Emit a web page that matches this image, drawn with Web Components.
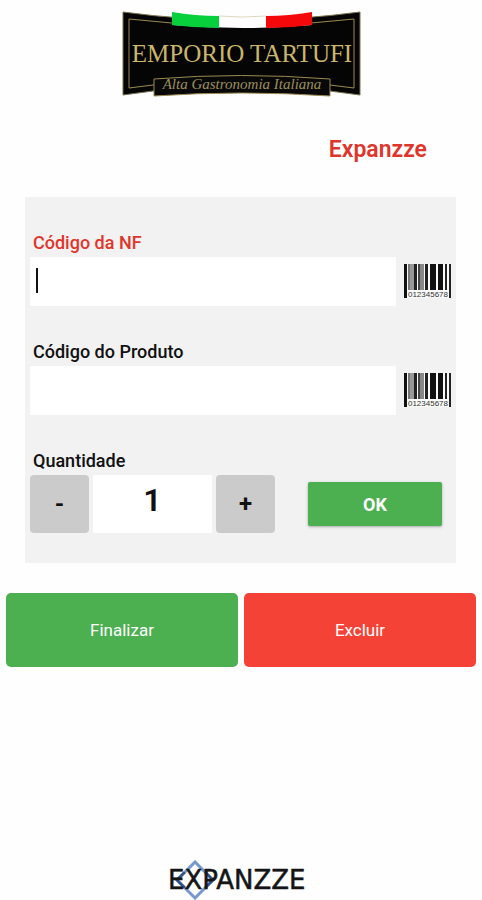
<!DOCTYPE html>
<html lang="pt-BR">
<head>
<meta charset="utf-8">
<meta name="viewport" content="width=device-width, initial-scale=1">
<title>Expanzze</title>
<style>
    body {
        margin: 0;
        background: #fefefe;
        color: #111;
        font-family: Roboto, "Liberation Sans", sans-serif;
    }
</style>
</head>
<body>
<expedition-page>
    <emporio-logo slot="logo"></emporio-logo>
    <span slot="user">Expanzze</span>
    <code-field label="Código da NF" active></code-field>
    <code-field label="Código do Produto"></code-field>
    <quantity-field label="Quantidade" value="1"></quantity-field>
    <action-button slot="actions">Finalizar</action-button>
    <action-button slot="actions" kind="danger">Excluir</action-button>
    <expanzze-logo slot="footer"></expanzze-logo>
</expedition-page>

<script>
class ExpeditionPage extends HTMLElement {

    connectedCallback() {
        this.attachShadow({ mode: 'open' });
        this.shadowRoot.innerHTML = `
            <style>
                :host {
                    display: flex;
                    flex-direction: column;
                    min-height: 100vh;
                }
                header {
                    display: flex;
                    flex-direction: column;
                    padding-top: 10px;
                }
                .logo {
                    display: flex;
                    justify-content: center;
                }
                .user {
                    align-self: flex-end;
                    margin: 37px 55px 0 0;
                    color: #e0352b;
                    font-size: 23px;
                    line-height: 32px;
                    font-weight: 600;
                }
                main {
                    display: flex;
                    flex-direction: column;
                    gap: 32px;
                    margin: 31px 26px 0 25px;
                    padding: 32px 4px 30px 5px;
                    background: #f2f2f2;
                }
                .actions {
                    display: grid;
                    grid-template-columns: 1fr 1fr;
                    gap: 6px;
                    margin: 30px 6px;
                }
                footer {
                    display: flex;
                    justify-content: center;
                    margin-top: auto;
                }
            </style>
            <header>
                <div class="logo"><slot name="logo"></slot></div>
                <div class="user"><slot name="user"></slot></div>
            </header>
            <main><slot></slot></main>
            <div class="actions"><slot name="actions"></slot></div>
            <footer><slot name="footer"></slot></footer>
        `;
    }
}

class CodeField extends HTMLElement {

    connectedCallback() {
        this.attachShadow({ mode: 'open' });
        this.shadowRoot.innerHTML = `
            <style>
                :host {
                    display: block;
                }
                label {
                    display: block;
                    padding: 0 3px 1px;
                    font-size: 18px;
                    line-height: 27px;
                    font-weight: 500;
                }
                :host([active]) label {
                    color: #e0352b;
                }
                .row {
                    display: flex;
                    gap: 8px;
                }
                input {
                    flex: 1;
                    min-width: 0;
                    box-sizing: border-box;
                    height: 49px;
                    padding: 0 8px;
                    border: 0;
                    outline: 0;
                    background: #fff;
                    font: inherit;
                    font-size: 20px;
                }
                /* caret of the field that waits for the scanner */
                :host([active]) input {
                    caret-color: transparent;
                    background: linear-gradient(#111, #111) 6px 11px / 2px 25px no-repeat #fff;
                }
                button {
                    padding: 0;
                    border: 0;
                    background: none;
                }
            </style>
            <label for="code">${this.getAttribute("label")}</label>
            <div class="row">
                <input id="code" type="text" autocomplete="off">
                <button type="button" aria-label="Ler código de barras"><barcode-icon></barcode-icon></button>
            </div>
        `;
    }
}

class BarcodeIcon extends HTMLElement {

    // x, width, colour
    bars = [
        [0, 3, "#111"], [4, 2, "#777"], [6, 4, "#999"],
        [10, 3, "#222"], [14, 2, "#444"], [16, 4, "#888"],
        [21, 3, "#222"], [26, 6, "#111"], [34, 5, "#111"],
        [41, 2, "#222"], [45, 2, "#222"]
    ];

    connectedCallback() {
        this.attachShadow({ mode: 'open' });
        const rects = this.bars
            .map(([x, width, fill], index) => {
                const isGuard = index == 0 || index == this.bars.length - 1;
                return `<rect x="${x}" y="0" width="${width}" height="${isGuard ? 34 : 26}" fill="${fill}"/>`;
            })
            .join("");
        this.shadowRoot.innerHTML = `
            <style>
                :host {
                    display: block;
                }
                svg {
                    display: block;
                }
            </style>
            <svg width="48" height="36" viewBox="0 0 48 36" shape-rendering="crispEdges">
                <rect width="47" height="34" fill="#fafafa"/>
                ${rects}
                <text x="24" y="33" text-anchor="middle" font-family="Liberation Sans, sans-serif" font-size="8" fill="#333">012345678</text>
            </svg>
        `;
    }
}

class QuantityField extends HTMLElement {

    connectedCallback() {
        this.attachShadow({ mode: 'open' });
        this.shadowRoot.innerHTML = `
            <style>
                :host {
                    display: block;
                }
                label {
                    display: block;
                    padding: 0 3px 1px;
                    font-size: 18px;
                    line-height: 27px;
                    font-weight: 500;
                }
                .row {
                    display: flex;
                    align-items: center;
                    gap: 4px;
                }
                button {
                    font: inherit;
                    color: #111;
                    border: 0;
                    padding: 0;
                }
                .step {
                    flex: none;
                    width: 59px;
                    height: 58px;
                    border-radius: 4px;
                    background: #cbcbcb;
                    font-size: 24px;
                    font-weight: 700;
                }
                input {
                    flex: 1;
                    min-width: 0;
                    box-sizing: border-box;
                    height: 58px;
                    padding: 0 0 8px;
                    border: 0;
                    outline: 0;
                    background: #fff;
                    color: #111;
                    font: inherit;
                    font-size: 32px;
                    font-weight: 600;
                    text-align: center;
                }
                .ok {
                    flex: none;
                    width: 134px;
                    height: 44px;
                    margin: 0 10px 0 29px;
                    border-radius: 2px;
                    background: #4caf50;
                    box-shadow: 0 1px 3px rgba(0, 0, 0, 0.3);
                    color: #fff;
                    font-size: 18px;
                    font-weight: 700;
                }
            </style>
            <label for="quantity">${this.getAttribute("label")}</label>
            <div class="row">
                <button class="step" id="minus" type="button">-</button>
                <input id="quantity" type="text" inputmode="numeric" value="${this.getAttribute("value") ?? "1"}">
                <button class="step" id="plus" type="button">+</button>
                <button class="ok" type="button">OK</button>
            </div>
        `;

        this.shadowRoot.querySelector("#minus").onclick = () => this.changeQuantity(-1);
        this.shadowRoot.querySelector("#plus").onclick = () => this.changeQuantity(1);
    }

    changeQuantity(step) {
        const input = this.shadowRoot.querySelector("#quantity");
        input.value = Math.max(1, Number(input.value) + step);
    }
}

class ActionButton extends HTMLElement {

    connectedCallback() {
        this.attachShadow({ mode: 'open' });
        this.shadowRoot.innerHTML = `
            <style>
                :host {
                    display: block;
                }
                button {
                    width: 100%;
                    height: 74px;
                    border: 0;
                    border-radius: 5px;
                    background: #4caf50;
                    color: #fff;
                    font: inherit;
                    font-size: 17px;
                }
                :host([kind="danger"]) button {
                    background: #f44336;
                }
            </style>
            <button type="button"><slot></slot></button>
        `;
    }
}

class EmporioLogo extends HTMLElement {

    connectedCallback() {
        this.attachShadow({ mode: 'open' });
        this.shadowRoot.innerHTML = `
            <style>
                :host {
                    display: block;
                }
                svg {
                    display: block;
                }
            </style>
            <svg width="240" height="87" viewBox="0 0 240 87">
                <path d="M2 2Q120 18 239 2V85Q120 67 2 85Z" fill="#050505" stroke="#77704f"/>
                <path d="M8 9Q120 23 233 9V78Q120 62 8 78Z" fill="none" stroke="#9c8a51"/>
                <path d="M51 3Q121 11 191 3V15Q121 21 51 15Z" fill="#fdfdfd"/>
                <path d="M98 6Q121 8 145 6" fill="none" stroke="#ddd9c4"/>
                <path d="M51 2Q74 6 98 6V18Q74 18 51 15Z" fill="#08cf3c"/>
                <path d="M145 6Q168 6 191 2V15Q168 18 145 18Z" fill="#f5080a"/>
                <text x="121" y="52" text-anchor="middle" font-family="Liberation Serif, serif" font-size="25" fill="#c9b66a">EMPORIO TARTUFI</text>
                <path d="M33 69Q120 62 209 69V86Q120 80 33 86Z" fill="#080808" stroke="#9c8a51"/>
                <text x="121" y="79" text-anchor="middle" font-family="Liberation Serif, serif" font-size="15" font-style="italic" fill="#9c8f5c">Alta Gastronomia Italiana</text>
            </svg>
        `;
    }
}

class ExpanzzeLogo extends HTMLElement {

    connectedCallback() {
        this.attachShadow({ mode: 'open' });
        this.shadowRoot.innerHTML = `
            <style>
                :host {
                    display: block;
                }
                svg {
                    display: block;
                }
            </style>
            <svg width="146" height="40" viewBox="0 0 146 40">
                <g fill="none" stroke-width="3">
                    <path d="M17 12L27 2L37 12M17 28L27 38L37 28" stroke="#7598cf"/>
                    <path d="M17 12L9 20L17 28M37 12L45 20L37 28" stroke="#2e5490"/>
                </g>
                <text x="0" y="29" font-family="DejaVu Sans, sans-serif" font-size="26" fill="#151515" stroke="#151515" stroke-width="0.5">EXPANZZE</text>
            </svg>
        `;
    }
}

window.customElements.define('barcode-icon', BarcodeIcon);
window.customElements.define('expedition-page', ExpeditionPage);
window.customElements.define('code-field', CodeField);
window.customElements.define('quantity-field', QuantityField);
window.customElements.define('action-button', ActionButton);
window.customElements.define('emporio-logo', EmporioLogo);
window.customElements.define('expanzze-logo', ExpanzzeLogo);
</script>
</body>
</html>
